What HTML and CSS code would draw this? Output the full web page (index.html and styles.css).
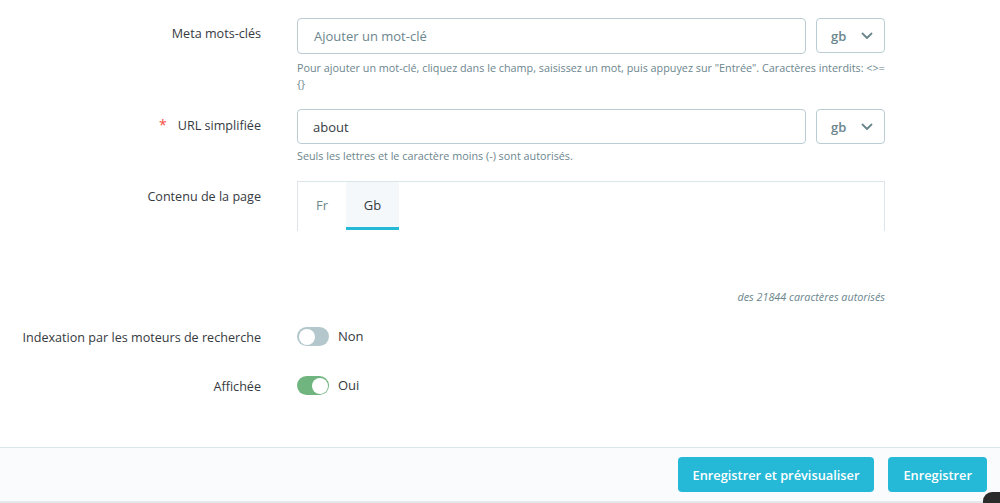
FILE: index.html
```html
<!DOCTYPE html>
<html lang="fr">
<head>
<meta charset="utf-8">
<title>Page</title>
<link rel="stylesheet" href="styles.css">
</head>
<body>
<div class="page">
  <form class="form">
    <div class="row row-meta">
      <div class="label">Meta mots-clés</div>
      <div class="field">
        <div class="input-group">
          <div class="input placeholder">Ajouter un mot-clé</div>
          <div class="select">gb <svg class="chev" width="12" height="8" viewBox="0 0 12 8"><path d="M1.5 1.5 L6 6 L10.5 1.5" fill="none" stroke="#6c868e" stroke-width="1.8" stroke-linecap="round" stroke-linejoin="round"/></svg></div>
        </div>
        <div class="help">Pour ajouter un mot-clé, cliquez dans le champ, saisissez un mot, puis appuyez sur "Entrée". Caractères interdits: &lt;&gt;= {}</div>
      </div>
    </div>

    <div class="row row-url">
      <div class="label"><span class="req">*</span>URL simplifiée</div>
      <div class="field">
        <div class="input-group">
          <div class="input value">about</div>
          <div class="select">gb <svg class="chev" width="12" height="8" viewBox="0 0 12 8"><path d="M1.5 1.5 L6 6 L10.5 1.5" fill="none" stroke="#6c868e" stroke-width="1.8" stroke-linecap="round" stroke-linejoin="round"/></svg></div>
        </div>
        <div class="help help-url">Seuls les lettres et le caractère moins (-) sont autorisés.</div>
      </div>
    </div>

    <div class="row row-content">
      <div class="label">Contenu de la page</div>
      <div class="field">
        <div class="tabs-box">
          <div class="tab">Fr</div>
          <div class="tab active">Gb</div>
        </div>
        <div class="counter">des 21844 caractères autorisés</div>
      </div>
    </div>

    <div class="row row-switch row-index">
      <div class="label">Indexation par les moteurs de recherche</div>
      <div class="field switch-field">
        <span class="switch off"><span class="knob"></span></span>
        <span class="switch-text">Non</span>
      </div>
    </div>

    <div class="row row-switch row-shown">
      <div class="label">Affichée</div>
      <div class="field switch-field">
        <span class="switch on"><span class="knob"></span></span>
        <span class="switch-text">Oui</span>
      </div>
    </div>
  </form>

  <div class="footer">
    <button type="button" class="btn">Enregistrer et prévisualiser</button>
    <button type="button" class="btn">Enregistrer</button>
  </div>
  <div class="corner-widget"></div>
</div>
</body>
</html>
```

FILE: styles.css
```css
* { box-sizing: border-box; }
html, body { margin: 0; padding: 0; background: #fff; }
body {
  font-family: "Open Sans", "Noto Sans", sans-serif;
  color: #363a41;
  font-size: 13px;
  width: 1000px;
  height: 503px;
  overflow: hidden;
}
.page { position: relative; height: 503px; display: flex; flex-direction: column; }
.form { padding-top: 18px; flex: 1; }
.row { display: grid; grid-template-columns: 261px 588px; column-gap: 36px; }
.label {
  text-align: right;
  font-size: 12.6px;
  line-height: 18px;
  padding-top: 7px;
  color: #363a41;
}
.req { color: #f54c3e; margin-right: 11px; font-size: 14px; }
.input-group { display: flex; gap: 10px; align-items: flex-start; }
.input {
  flex: 1;
  height: 36px;
  border: 1px solid #bbcdd2;
  border-radius: 4px;
  padding: 0 16px;
  display: flex;
  align-items: center;
  font-size: 13px;
}
.input.placeholder { color: #6c868e; }
.input.value { color: #363a41; padding-left: 15px; height: 35px; }
.select {
  width: 69px;
  height: 35px;
  border: 1px solid #bbcdd2;
  border-radius: 4px;
  padding-left: 14px;
  display: flex;
  align-items: center;
  gap: 15px;
  color: #6c868e;
  font-weight: 600;
  font-size: 13px;
}
.chev { margin-top: 1px; }
.help {
  color: #6c868e;
  font-size: 10.8px;
  line-height: 16px;
  margin-top: 6px;
}
.help-url { margin-top: 4px; }
.row-url { margin-top: 17px; }
.row-content { margin-top: 17px; }
.tabs-box {
  height: 50px;
  border: 1px solid #dbe6e9;
  border-bottom: none;
  display: flex;
}
.tab {
  width: 48px;
  height: 48px;
  display: flex;
  align-items: center;
  justify-content: center;
  color: #6c868e;
  font-size: 13px;
  padding-bottom: 2px;
}
.tab.active {
  width: 53px;
  background: #f4f8fb;
  color: #363a41;
  border-bottom: 3px solid #25b9d7;
  padding-bottom: 0;
}
.counter {
  text-align: right;
  font-style: italic;
  color: #6c868e;
  font-size: 10.8px;
  line-height: 16px;
  margin-top: 58px;
}
.row-index { margin-top: 22px; }
.row-shown { margin-top: 29px; }
.row-switch .label { padding-top: 2px; }
.switch-field { display: flex; align-items: center; gap: 9px; height: 19px; }
.switch {
  position: relative;
  width: 32px;
  height: 19px;
  border-radius: 10px;
  display: inline-block;
}
.switch.off { background: #b3c7cd; }
.switch.on { background: #70b580; }
.knob {
  position: absolute;
  top: 1.5px;
  width: 16px;
  height: 16px;
  border-radius: 50%;
  background: #fff;
}
.switch.off .knob { left: 1.5px; }
.switch.on .knob { right: 1.5px; }
.switch-text { font-size: 13px; color: #363a41; margin-top: -1px; }
.footer {
  height: 56px;
  background: #fafbfc;
  border-top: 1px solid #dbe6e9;
  border-bottom: 2px solid #e3e8eb;
  display: flex;
  justify-content: flex-end;
  align-items: flex-start;
  gap: 14px;
  padding: 9px 13px 0 0;
}
.btn {
  height: 35px;
  background: #25b9d7;
  border: none;
  border-radius: 4px;
  color: #fff;
  font-family: "Open Sans", "Noto Sans", sans-serif;
  font-weight: 600;
  font-size: 12.8px;
  padding: 0 15px;
  cursor: pointer;
}
.corner-widget {
  position: absolute;
  left: 983px;
  top: 492px;
  width: 34px;
  height: 34px;
  border-radius: 9px;
  background: #2b2b2b;
}
```
